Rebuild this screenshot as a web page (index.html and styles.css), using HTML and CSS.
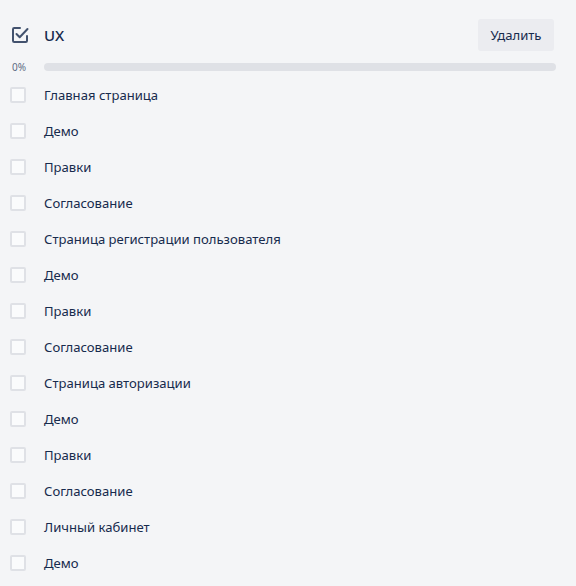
FILE: index.html
```html
<!DOCTYPE html>
<html lang="ru">
<head>
<meta charset="utf-8">
<link rel="stylesheet" href="styles.css">
</head>
<body>
<div class="checklist">
  <div class="header">
    <span class="icon">
      <svg width="18" height="18" viewBox="0 0 18 18" fill="none">
        <path d="M9 2H3.2C2.5 2 2 2.5 2 3.2v11.6c0 .7.5 1.2 1.2 1.2h11.6c.7 0 1.2-.5 1.2-1.2V10" stroke="#42526e" stroke-width="2" stroke-linecap="round"/>
        <path d="M5.5 8l3.2 3.2L16.5 3" stroke="#42526e" stroke-width="2" stroke-linecap="round" stroke-linejoin="round"/>
      </svg>
    </span>
    <h3 class="title">UX</h3>
    <button class="btn">Удалить</button>
  </div>
  <div class="progress">
    <span class="percent">0%</span>
    <div class="bar"></div>
  </div>
  <ul class="items">
    <li class="item"><span class="box"></span><span class="label">Главная страница</span></li>
    <li class="item"><span class="box"></span><span class="label">Демо</span></li>
    <li class="item"><span class="box"></span><span class="label">Правки</span></li>
    <li class="item"><span class="box"></span><span class="label">Согласование</span></li>
    <li class="item"><span class="box"></span><span class="label">Страница регистрации пользователя</span></li>
    <li class="item"><span class="box"></span><span class="label">Демо</span></li>
    <li class="item"><span class="box"></span><span class="label">Правки</span></li>
    <li class="item"><span class="box"></span><span class="label">Согласование</span></li>
    <li class="item"><span class="box"></span><span class="label">Страница авторизации</span></li>
    <li class="item"><span class="box"></span><span class="label">Демо</span></li>
    <li class="item"><span class="box"></span><span class="label">Правки</span></li>
    <li class="item"><span class="box"></span><span class="label">Согласование</span></li>
    <li class="item"><span class="box"></span><span class="label">Личный кабинет</span></li>
    <li class="item"><span class="box"></span><span class="label">Демо</span></li>
  </ul>
</div>
</body>
</html>
```

FILE: styles.css
```css
html, body {
  margin: 0;
  padding: 0;
  background: #f4f5f7;
}
body {
  font-family: "Noto Sans", "Open Sans", sans-serif;
  color: #172b4d;
  font-size: 13px;
}
.checklist {
  padding: 19px 22px 0 10px;
}
.header {
  display: flex;
  align-items: center;
  height: 32px;
}
.icon {
  width: 34px;
  display: flex;
  align-items: center;
  padding-left: 1px;
  box-sizing: border-box;
}
.icon svg { display: block; }
.title {
  flex: 1;
  margin: 0;
  font-size: 15px;
  font-weight: 500;
  color: #172b4d;
}
.btn {
  height: 32px;
  width: 76px;
  border: none;
  border-radius: 3px;
  background: #ebecf0;
  color: #172b4d;
  font-family: inherit;
  font-size: 13.1px;
  padding: 0;
}
.progress {
  display: flex;
  align-items: center;
  margin-top: 12px;
  margin-right: -2px;
  height: 8px;
}
.percent {
  width: 34px;
  font-size: 10px;
  color: #5e6c84;
  padding-left: 2px;
  box-sizing: border-box;
}
.bar {
  flex: 1;
  height: 8px;
  border-radius: 4px;
  background: #dfe1e6;
}
.items {
  list-style: none;
  margin: 6px 0 0;
  padding: 0;
}
.item {
  display: flex;
  align-items: center;
  height: 36px;
}
.box {
  width: 16px;
  height: 16px;
  box-sizing: border-box;
  border: 2px solid #dfe1e6;
  border-radius: 2px;
  background: #fafbfc;
  margin-right: 18px;
}
.label {
  font-size: 13.1px;
  color: #172b4d;
}
```
